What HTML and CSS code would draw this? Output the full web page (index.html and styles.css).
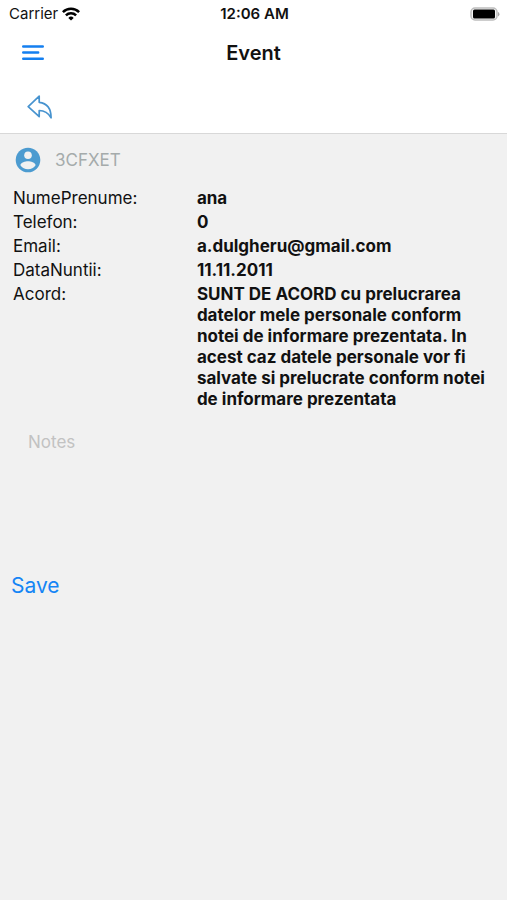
FILE: index.html
```html
<!DOCTYPE html>
<html lang="ro">
<head>
  <meta charset="UTF-8">
  <meta name="viewport" content="width=device-width, initial-scale=1.0">
  <title>Event</title>
  <link rel="stylesheet" href="styles.css">
</head>
<body>
  <header class="header">
    <!-- Device status bar -->
    <div class="status-bar">
      <div class="carrier">
        <span>Carrier</span>
        <svg width="18" height="14" viewBox="0 0 18 14" aria-hidden="true">
          <g fill="none" stroke="#000" stroke-width="2.5">
            <path d="M0.9 5.2a11.5 11.5 0 0 1 16.2 0"/>
            <path d="M3.9 8.3a7.2 7.2 0 0 1 10.2 0"/>
          </g>
          <path d="M9 13.6l-2.7-2.7a3.8 3.8 0 0 1 5.4 0z"/>
        </svg>
      </div>
      <div class="time">12:06 AM</div>
      <div class="battery">
        <svg width="30" height="14" viewBox="0 0 30 14" aria-hidden="true">
          <rect x="1" y="1" width="26" height="12" rx="4" fill="#f4f4f4" stroke="#bdbdbd" stroke-width="1.5"/>
          <rect x="3" y="2.5" width="22" height="9" rx="1.5"/>
          <path d="M28 5v4.4a2.4 2.4 0 0 0 0-4.4z" fill="#a8a8a8"/>
        </svg>
      </div>
    </div>

    <div class="nav-bar">
      <button class="icon-button" type="button" aria-label="Menu">
        <svg width="22" height="16" viewBox="0 0 22 16">
          <path d="M1.2 1.5h19.6M1.2 7.5h15M1.2 13.7h19.6" fill="none" stroke="#147ff0" stroke-width="2.4" stroke-linecap="round"/>
        </svg>
      </button>
      <h1 class="title">Event</h1>
    </div>

    <div class="tool-bar">
      <button class="icon-button" type="button" aria-label="Back">
        <svg width="26" height="24" viewBox="0 0 26 24">
          <path d="M12.2 1.2L1.2 11.6l11 10v-6.1c5.4 0 8.7 1.7 11.9 7.3 0-8.8-3.9-14.6-11.9-15.5z" fill="none" stroke="#4793cf" stroke-width="1.7" stroke-linejoin="round"/>
        </svg>
      </button>
    </div>
  </header>

  <main class="content">
    <div class="guest">
      <svg width="26" height="26" viewBox="0 0 26 26" aria-hidden="true">
        <circle cx="13" cy="13" r="12.3" fill="#4c9bd0"/>
        <circle cx="13" cy="8.3" r="3.8" fill="#f1f1f1"/>
        <path d="M5.4 18.2c.2-2.7 5-4 7.6-4s7.4 1.3 7.6 4a9.1 9.1 0 0 1-15.2 0z" fill="#f1f1f1"/>
      </svg>
      <span class="guest-code">3CFXET</span>
    </div>

    <dl class="details">
      <dt>NumePrenume:</dt>
      <dd>ana</dd>
      <dt>Telefon:</dt>
      <dd>0</dd>
      <dt>Email:</dt>
      <dd>a.dulgheru@gmail.com</dd>
      <dt>DataNuntii:</dt>
      <dd>11.11.2011</dd>
      <dt>Acord:</dt>
      <dd>SUNT DE ACORD cu prelucrarea datelor mele personale conform notei de informare prezentata. In acest caz datele personale vor fi salvate si prelucrate conform notei de informare prezentata</dd>
    </dl>

    <form class="notes-form">
      <textarea class="notes" name="notes" placeholder="Notes" aria-label="Notes"></textarea>
      <button class="save-button" type="button">Save</button>
    </form>
  </main>
</body>
</html>
```

FILE: styles.css
```css
* {
  box-sizing: border-box;
}

body {
  margin: 0;
  min-height: 100vh;
  background: #f1f1f1;
  color: #111;
  font-family: Inter, "Liberation Sans", sans-serif;
  font-size: 17px;
  line-height: 20px;
}

button {
  padding: 0;
  border: 0;
  background: none;
  font-family: inherit;
  cursor: pointer;
}

svg {
  display: block;
}

/* Header: status bar, title row, back row */
.header {
  background: #fff;
  border-bottom: 1px solid #d8d8d8;
}

.status-bar {
  display: grid;
  grid-template-columns: 1fr auto 1fr;
  align-items: center;
  height: 28px;
  padding: 0 7px 0 9px;
  font-size: 15px;
}

.carrier {
  display: flex;
  align-items: center;
  gap: 4px;
}

.time {
  font-weight: 600;
}

.battery {
  justify-self: end;
}

.nav-bar {
  display: grid;
  grid-template-columns: 1fr auto 1fr;
  align-items: center;
  height: 49px;
  padding: 0 22px;
}

.icon-button {
  justify-self: start;
}

.title {
  margin: 0;
  font-size: 20px;
  font-weight: 600;
}

.tool-bar {
  display: flex;
  align-items: center;
  height: 56px;
  padding: 4px 27px 0;
}

/* Guest record */
.guest {
  display: flex;
  align-items: center;
  gap: 14px;
  padding: 13px 15px;
}

.guest-code {
  color: #a5abab;
}

.details {
  display: grid;
  grid-template-columns: 38% 1fr;
  row-gap: 3px;
  margin: 0;
  padding: 2px 10px 0 13px;
  line-height: 21px;
}

.details dd {
  margin: 0;
  font-weight: 700;
}

/* Notes and save */
.notes-form {
  display: flex;
  flex-direction: column;
  align-items: flex-start;
  padding: 22px 11px;
}

.notes {
  width: 100%;
  height: 140px;
  padding: 0 17px;
  border: 0;
  background: none;
  color: inherit;
  font: inherit;
  resize: none;
}

.notes::placeholder {
  color: #c2c2c2;
}

.save-button {
  color: #1585f5;
  font-size: 21px;
  line-height: 28px;
}
```
